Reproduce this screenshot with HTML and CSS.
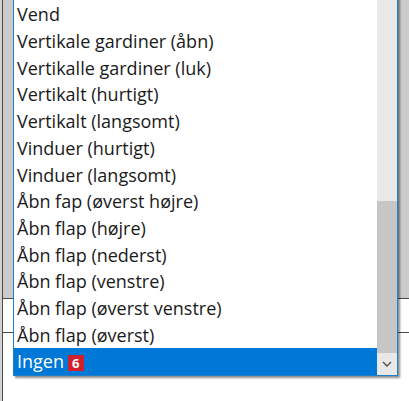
FILE: index.html
```html
<!DOCTYPE html>
<html lang="da">
<head>
    <meta charset="UTF-8">
    <meta name="viewport" content="width=device-width, initial-scale=1.0">
    <title>Animationer</title>
    <link rel="stylesheet" href="styles.css">
</head>
<body>
    <div class="backdrop">
        <div class="pane pane-top"></div>
        <div class="pane pane-mid"></div>
        <div class="pane pane-low"></div>
    </div>

    <!-- Open dropdown list -->
    <div class="dropdown">
        <ul class="options">
            <li>Vend</li>
            <li>Vertikale gardiner (åbn)</li>
            <li>Vertikalle gardiner (luk)</li>
            <li>Vertikalt (hurtigt)</li>
            <li>Vertikalt (langsomt)</li>
            <li>Vinduer (hurtigt)</li>
            <li>Vinduer (langsomt)</li>
            <li>Åbn fap (øverst højre)</li>
            <li>Åbn flap (højre)</li>
            <li>Åbn flap (nederst)</li>
            <li>Åbn flap (venstre)</li>
            <li>Åbn flap (øverst venstre)</li>
            <li>Åbn flap (øverst)</li>
            <li class="selected">Ingen <span class="badge">6</span></li>
        </ul>
        <div class="scrollbar">
            <div class="track"></div>
            <div class="thumb"></div>
            <div class="arrow">
                <svg width="10" height="6" viewBox="0 0 10 6">
                    <path d="M1 1 L5 5 L9 1" fill="none" stroke="#505050" stroke-width="1.4"/>
                </svg>
            </div>
        </div>
    </div>
</body>
</html>
```

FILE: styles.css
```css
body {
    margin: 0;
    width: 409px;
    height: 401px;
    overflow: hidden;
    background-color: #d2d2d2;
    font-family: "Open Sans", "Noto Sans", sans-serif;
}
.backdrop {
    margin-left: 2px;
    height: 401px;
    border-left: 1px solid #4a4a4a;
    display: flex;
    flex-direction: column;
}
.pane-top {
    height: 298px;
    background-color: #cbcbcb;
    border-bottom: 1px solid #4a4a4a;
}
.pane-mid {
    height: 33px;
    background-color: #ffffff;
    border-bottom: 1px solid #4a4a4a;
}
.pane-low {
    flex: 1;
    background-color: #ffffff;
}
.dropdown {
    position: absolute;
    left: 13px;
    top: -20px;
    width: 383px;
    height: 394px;
    border: 1px solid #1f7fc9;
    background-color: #ffffff;
    box-shadow: 2px 2px 2px rgba(0, 0, 0, 0.45);
    display: flex;
}
.options {
    flex: 1;
    margin: 0;
    padding: 0;
    list-style: none;
    display: flex;
    flex-direction: column;
    justify-content: flex-end;
    overflow: hidden;
}
.options li {
    height: 26.7px;
    line-height: 27.7px;
    padding-left: 3px;
    font-size: 18px;
    color: #1a1a1a;
    white-space: nowrap;
}
.options li.selected {
    background-color: #0078d7;
    color: #ffffff;
}
.badge {
    display: inline-block;
    width: 16px;
    height: 16px;
    margin-left: -1px;
    background-color: #d0202e;
    color: #ffffff;
    font-size: 13px;
    font-weight: bold;
    line-height: 16px;
    text-align: center;
    vertical-align: 0;
}
.scrollbar {
    width: 20px;
    display: flex;
    flex-direction: column;
}
.track {
    flex: 1;
    background-color: #e8e8e8;
}
.thumb {
    height: 152px;
    background-color: #c6c6c6;
}
.arrow {
    height: 22px;
    background-color: #e8e8e8;
    display: flex;
    align-items: center;
    justify-content: center;
}
```
